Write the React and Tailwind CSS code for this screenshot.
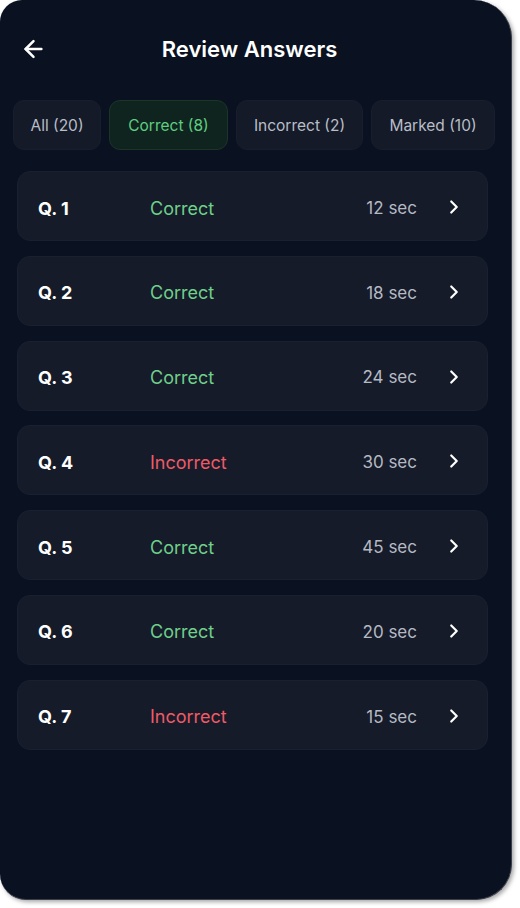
import React from 'react';
import { ChevronRight, ArrowLeft } from 'lucide-react';

const tabs = [
    { label: 'All (20)', w: 'w-[88px]' },
    { label: 'Correct (8)', w: 'w-[119px]', active: true },
    { label: 'Incorrect (2)', w: 'w-[127px]' },
    { label: 'Marked (10)', w: 'w-[124px]' },
];

const answers = [
    { q: 1, ok: true, time: 12 },
    { q: 2, ok: true, time: 18 },
    { q: 3, ok: true, time: 24 },
    { q: 4, ok: false, time: 30 },
    { q: 5, ok: true, time: 45 },
    { q: 6, ok: true, time: 20 },
    { q: 7, ok: false, time: 15 },
];

const App = () => {
    return (
        <div className="w-[520px] h-[908px] bg-white" style={{ fontFamily: 'Inter, "Noto Sans", sans-serif' }}>
            <div className="w-[512px] h-[900px] bg-[#0a1120] rounded-tl-[22px] rounded-bl-[26px] rounded-tr-[38px] rounded-br-[36px] border-r border-b border-[#3a3f4a] shadow-[2px_2px_4px_rgba(0,0,0,0.35)] overflow-hidden">
                {/* Header */}
                <div className="relative flex items-center justify-center h-[48px] mt-[25px]">
                    <button className="absolute left-[20px] top-1/2 -translate-y-1/2 text-white" aria-label="Back">
                        <ArrowLeft className="w-[27px] h-[27px]" strokeWidth={2.2} />
                    </button>
                    <h1 className="text-[22px] font-semibold text-white mr-[12px]">Review Answers</h1>
                </div>

                {/* Tabs */}
                <div className="flex gap-[8px] pl-[13px] mt-[27px]">
                    {tabs.map((t) => (
                        <div
                            key={t.label}
                            className={`${t.w} h-[50px] rounded-[11px] flex items-center justify-center text-[15.5px] pt-[1px] ${
                                t.active
                                    ? 'bg-[#10241f] border border-[#1b3529] text-[#5fce80]'
                                    : 'bg-[#141a28] border border-[#181e2d] text-[#b9bdc7]'
                            }`}
                        >
                            {t.label}
                        </div>
                    ))}
                </div>

                {/* Answer rows */}
                <div className="flex flex-col gap-[14.8px] pl-[17px] pr-[23px] mt-[21px]">
                    {answers.map((a) => (
                        <div
                            key={a.q}
                            className="h-[70px] rounded-[13px] bg-[#151b29] border border-[#192030] flex items-center pl-[20px] pr-[22px] pt-[4px]"
                        >
                            <span className="w-[112px] text-[18px] font-bold text-white">Q. {a.q}</span>
                            <span className={`text-[18px] ${a.ok ? 'text-[#6fd08a]' : 'text-[#ef5a67]'}`}>
                                {a.ok ? 'Correct' : 'Incorrect'}
                            </span>
                            <span className="ml-auto text-[17px] text-[#b5b9c3] mt-[1px]">{a.time} sec</span>
                            <ChevronRight className="ml-[26px] w-[22px] h-[22px] text-white -mt-[2px]" strokeWidth={2.4} />
                        </div>
                    ))}
                </div>
            </div>
        </div>
    );
};

export default App;
